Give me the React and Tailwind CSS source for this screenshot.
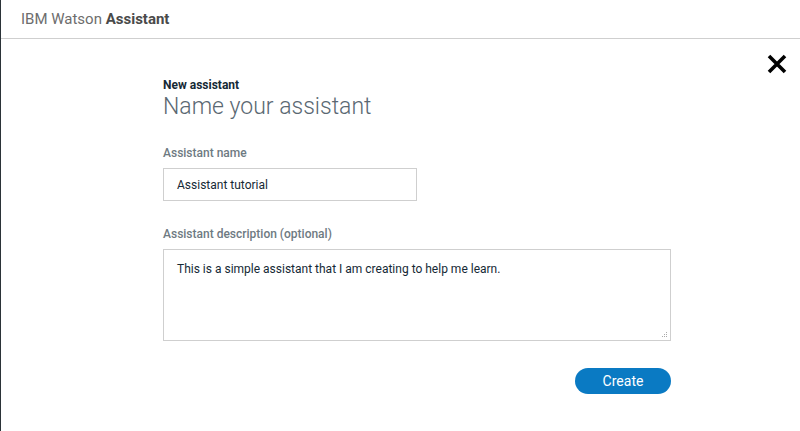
import React from "react";

export default function App() {
  return (
    <div className="w-[800px] h-[431px] bg-white border-l border-[#2b3338] flex flex-col overflow-hidden" style={{ fontFamily: 'Roboto, "Noto Sans", sans-serif' }}>
      <header className="h-[39px] shrink-0 border-b border-[#cfcfcf] flex items-center pl-[20px]">
        <span className="text-[15px] text-[#6d6d6d]">
          IBM Watson <span className="font-bold text-[#4a4a4a]">Assistant</span>
        </span>
      </header>
      <div className="flex-1 relative">
        <button className="absolute right-[12px] top-[14px] w-[22px] h-[22px] flex items-center justify-center">
          <svg width="20" height="20" viewBox="0 0 20 20">
            <path d="M2 2 L18 18 M18 2 L2 18" stroke="#000" strokeWidth="3.6" strokeLinecap="butt" />
          </svg>
        </button>
        <div className="ml-[162px] w-[508px] pt-[39px]">
          <div className="text-[12px] font-bold text-[#152935] leading-[14px]">New assistant</div>
          <h1 className="text-[23px] font-light text-[#5a6872] leading-[30px]">Name your assistant</h1>
          <label className="block mt-[23px] text-[12px] font-medium text-[#6e7a82] leading-[16px]">Assistant name</label>
          <div className="mt-[7px] w-[254px] h-[33px] border border-[#cfcfcf] flex items-center pl-[13px] text-[12px] text-[#152935]">
            Assistant tutorial
          </div>
          <label className="block mt-[25px] text-[12px] font-medium text-[#6e7a82] leading-[16px]">Assistant description (optional)</label>
          <div className="relative mt-[7px] w-[508px] h-[92px] border border-[#cfcfcf] pl-[13px] pt-[11px] text-[12px] text-[#152935] leading-[16px]">
            This is a simple assistant that I am creating to help me learn.
            <svg className="absolute right-[2px] bottom-[2px]" width="7" height="7" viewBox="0 0 7 7">
              <rect x="5" y="1" width="1" height="1" fill="#aaa" />
              <rect x="3" y="3" width="1" height="1" fill="#aaa" />
              <rect x="5" y="3" width="1" height="1" fill="#aaa" />
              <rect x="1" y="5" width="1" height="1" fill="#aaa" />
              <rect x="3" y="5" width="1" height="1" fill="#aaa" />
              <rect x="5" y="5" width="1" height="1" fill="#aaa" />
            </svg>
          </div>
          <div className="flex justify-end mt-[27px]">
            <button className="w-[96px] h-[26px] rounded-full bg-[#0a7ac3] text-white text-[14px] leading-none flex items-center justify-center">
              Create
            </button>
          </div>
        </div>
      </div>
    </div>
  );
}
